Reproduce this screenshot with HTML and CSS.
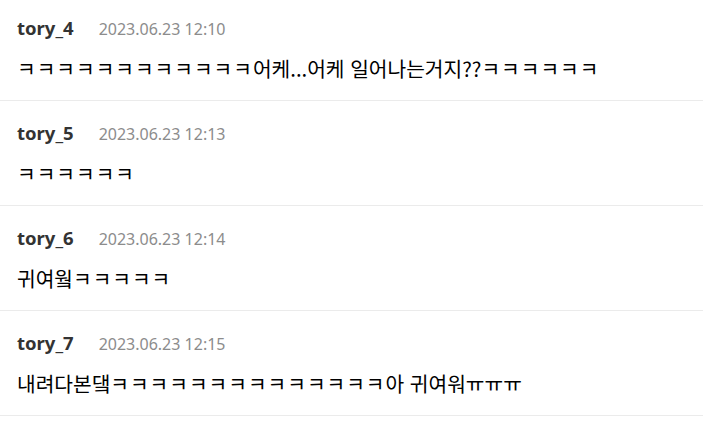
FILE: index.html
```html
<!DOCTYPE html>
<html lang="ko">
<head>
  <meta charset="UTF-8">
  <meta name="viewport" content="width=device-width, initial-scale=1.0">
  <title>댓글</title>
  <link rel="stylesheet" href="styles.css">
</head>
<body>
  <ul class="comments">
    <li class="comment">
      <div class="meta">
        <span class="name">tory_4</span>
        <span class="date">2023.06.23 12:10</span>
      </div>
      <p class="text"><span class="kk">ㅋㅋㅋㅋㅋㅋㅋㅋㅋㅋㅋㅋ</span>어케...어케 일어나는거지??<span class="kk">ㅋㅋㅋㅋㅋㅋ</span></p>
    </li>
    <li class="comment">
      <div class="meta">
        <span class="name">tory_5</span>
        <span class="date">2023.06.23 12:13</span>
      </div>
      <p class="text"><span class="kk">ㅋㅋㅋㅋㅋㅋ</span></p>
    </li>
    <li class="comment">
      <div class="meta">
        <span class="name">tory_6</span>
        <span class="date">2023.06.23 12:14</span>
      </div>
      <p class="text">귀여웤<span class="kk">ㅋㅋㅋㅋㅋ</span></p>
    </li>
    <li class="comment">
      <div class="meta">
        <span class="name">tory_7</span>
        <span class="date">2023.06.23 12:15</span>
      </div>
      <p class="text">내려다본댘<span class="kk">ㅋㅋㅋㅋㅋㅋㅋㅋㅋㅋㅋㅋㅋㅋ</span>아 귀여워ㅠㅠㅠ</p>
    </li>
  </ul>
</body>
</html>
```

FILE: styles.css
```css
/* 댓글 목록 */
:root {
  --line: #ebebeb;
  --name: #333333;
  --date: #8c8c8c;
}

body {
  margin: 0;
  background: #ffffff;
  font-family: "Noto Sans", "Noto Sans CJK KR", sans-serif;
  color: #000000;
}

.comments {
  list-style: none;
  margin: -4px 0 0;
  padding: 0;
}

.comment {
  padding: 20px 17px 18px;
  border-bottom: 1px solid var(--line);
}

.meta {
  display: flex;
  align-items: baseline;
  gap: 25px;
  height: 24px;
  line-height: 24px;
}

.name {
  font-size: 18.5px;
  font-weight: bold;
  color: var(--name);
}

.date {
  font-size: 16px;
  color: var(--date);
}

.text {
  margin: 14px 0 0;
  font-family: "Noto Sans CJK KR", sans-serif;
  font-size: 20.3px;
  line-height: 28px;
}

/* 자모는 원본 폰트에서 조금 더 넓다 */
.kk {
  letter-spacing: 1px;
}
```
